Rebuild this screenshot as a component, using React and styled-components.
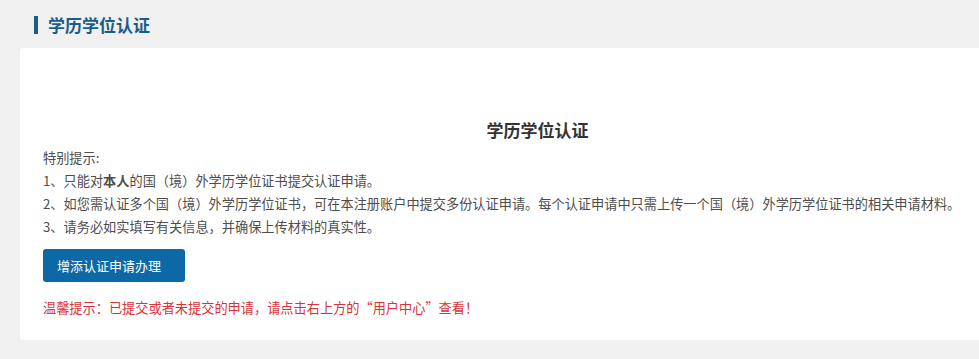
import React from 'react'
import styled, { createGlobalStyle } from 'styled-components'

const GlobalStyle = createGlobalStyle`
  html, body {
    margin: 0;
    padding: 0;
    background: #f0f0f0;
    font-family: "Microsoft YaHei", "Noto Sans CJK SC", "Noto Sans", sans-serif;
  }
`

const Page = styled.div`
  width: 979px;
  height: 359px;
  overflow: hidden;
  background: #f0f0f0;
`

const Header = styled.div`
  display: flex;
  align-items: center;
  height: 48px;
  padding-left: 34px;
  padding-top: 2px;
  box-sizing: border-box;
`

const Bar = styled.span`
  width: 4px;
  height: 18px;
  background: #1b5d88;
  margin-right: 10px;
`

const HeaderTitle = styled.h2`
  margin: 0;
  font-size: 17px;
  font-weight: 700;
  line-height: 20px;
  color: #1b5d88;
`

const Panel = styled.div`
  margin-left: 20px;
  height: 292px;
  background: #fff;
  border-radius: 3px 0 0 3px;
  padding: 71px 23px 0;
  box-sizing: border-box;
`

const Title = styled.h3`
  margin: 0 0 5px;
  padding-left: 76px;
  text-align: center;
  font-size: 17px;
  font-weight: 700;
  line-height: 22px;
  color: #333;
`

const Line = styled.p`
  margin: 0;
  font-size: 13.2px;
  line-height: 23px;
  color: ${p => (p.$warn ? '#d8323a' : '#4d4d4d')};
  white-space: nowrap;
`

const Button = styled.button`
  display: block;
  width: 142px;
  height: 33px;
  margin: 11px 0 14px;
  padding: 0 0 0 14px;
  text-align: left;
  border: none;
  border-radius: 3px;
  background: #0d69a6;
  color: #fff;
  font-family: inherit;
  font-size: 13px;
  cursor: pointer;
`

export default function App() {
  return (
    <Page>
      <GlobalStyle />
      <Header>
        <Bar />
        <HeaderTitle>学历学位认证</HeaderTitle>
      </Header>
      <Panel>
        <Title>学历学位认证</Title>
        <Line>特别提示:</Line>
        <Line>1、只能对<b>本人</b>的国（境）外学历学位证书提交认证申请。</Line>
        <Line>2、如您需认证多个国（境）外学历学位证书，可在本注册账户中提交多份认证申请。每个认证申请中只需上传一个国（境）外学历学位证书的相关申请材料。</Line>
        <Line>3、请务必如实填写有关信息，并确保上传材料的真实性。</Line>
        <Button>增添认证申请办理</Button>
        <Line $warn>温馨提示：已提交或者未提交的申请，请点击右上方的“用户中心”查看！</Line>
      </Panel>
    </Page>
  )
}
